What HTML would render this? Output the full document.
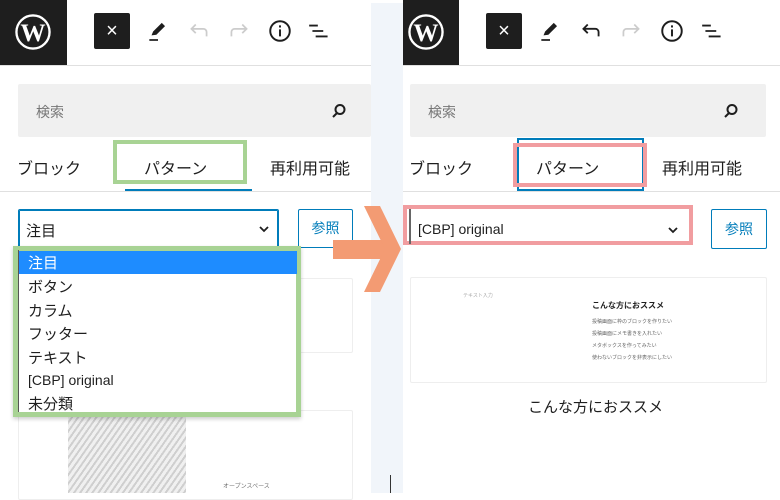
<!DOCTYPE html>
<html><head><meta charset="utf-8"><style>
*{margin:0;padding:0;box-sizing:border-box}
body{width:780px;height:493px;overflow:hidden;background:#fff;position:relative;font-family:"Liberation Sans","Noto Sans CJK JP",sans-serif;color:#1e1e1e}
.a{position:absolute}
.t{font-size:15px;white-space:nowrap}
</style></head><body>
<div class="a" style="left:371px;top:3px;width:32px;height:490px;background:#f1f5fa"></div>
<div class="a" style="left:390px;top:475px;width:1px;height:18px;background:#333"></div>

<!-- LEFT PANEL -->
<div class="a" style="left:0;top:0;width:67px;height:65px;background:#1e1e1e"></div>
<svg class="a" style="left:15px;top:14px" width="36" height="36" viewBox="0 0 20 20"><circle cx="10" cy="10" r="9.2" fill="none" stroke="#fff" stroke-width="1.3"/><text x="10" y="15" font-family="Liberation Serif,serif" font-weight="bold" font-size="14" fill="#fff" text-anchor="middle">W</text></svg>
<div class="a" style="left:94px;top:13px;width:36px;height:36px;background:#1e1e1e;border-radius:2px;color:#fff;font-size:20px;line-height:36px;text-align:center">×</div>
<svg class="a" style="left:145px;top:18px" width="26" height="26" viewBox="0 0 24 24"><path d="M6 16l1.5-3.5 8-8 3 3-8 8z" fill="#1e1e1e"/><rect x="4" y="19.5" width="8" height="1.6" fill="#1e1e1e"/></svg>
<svg class="a" style="left:186px;top:18px" width="26" height="26" viewBox="0 0 24 24" fill="none" stroke="#ccc" stroke-width="1.6"><path d="M5 10h11a3 3 0 013 3v4M9 6L5 10l4 4"/></svg>
<svg class="a" style="left:226px;top:18px" width="26" height="26" viewBox="0 0 24 24" fill="none" stroke="#ccc" stroke-width="1.6"><path d="M19 10H8a3 3 0 00-3 3v4M15 6l4 4-4 4"/></svg>
<svg class="a" style="left:267px;top:18px" width="26" height="26" viewBox="0 0 24 24" fill="none" stroke="#1e1e1e" stroke-width="1.8"><circle cx="12" cy="12" r="9"/><path d="M12 10.5v6.5M12 6.8v2"/></svg>
<svg class="a" style="left:307px;top:18px" width="26" height="26" viewBox="0 0 24 24" stroke="#1e1e1e" stroke-width="1.7"><path d="M2 7h8M5 12h10M8 17h11"/></svg>
<div class="a" style="left:0;top:65px;width:371px;height:1px;background:#e0e0e0"></div>
<div class="a" style="left:18px;top:84px;width:353px;height:53px;background:#f0f0f0;border-radius:2px"></div>
<div class="a t" style="left:36px;top:102px;color:#757575;font-size:14px">検索</div>
<svg class="a" style="left:330px;top:102px" width="18" height="18" viewBox="0 0 18 18" fill="none" stroke="#1e1e1e" stroke-width="2"><circle cx="10" cy="7.5" r="4.5"/><path d="M7 11l-4 4"/></svg>
<div class="a t" style="left:17px;top:155px;font-size:16px">ブロック</div>
<div class="a t" style="left:144px;top:155px;font-size:16px">パターン</div>
<div class="a t" style="left:270px;top:155px;font-size:16px">再利用可能</div>
<div class="a" style="left:113px;top:140px;width:134px;height:44px;border:4px solid #a8d394"></div>
<div class="a" style="left:125px;top:189px;width:127px;height:2px;background:#007cba"></div>
<div class="a" style="left:0;top:191px;width:371px;height:1px;background:#e0e0e0"></div>
<div class="a" style="left:18px;top:209px;width:261px;height:39px;border:1px solid #007cba;box-shadow:0 0 0 1px #007cba inset;border-radius:2px"></div>
<div class="a t" style="left:26px;top:220px">注目</div>
<svg class="a" style="left:258px;top:225px" width="12" height="8" viewBox="0 0 12 8" fill="none" stroke="#1e1e1e" stroke-width="1.8"><path d="M2 2l4 4 4-4"/></svg>
<div class="a" style="left:298px;top:209px;width:55px;height:39px;border:1px solid #007cba;border-radius:2px;color:#007cba;font-size:14px;text-align:center;line-height:37px">参照</div>
<div class="a" style="left:18px;top:278px;width:335px;height:75px;border:1px solid #eee;border-radius:2px"></div>
<div class="a" style="left:18px;top:410px;width:335px;height:90px;border:1px solid #eee;border-radius:2px"></div>
<div class="a" style="left:68px;top:416px;width:118px;height:77px;background:repeating-linear-gradient(125deg,#f0f0f0 0 3px,#cfcfcf 3px 5px)"></div>
<div class="a" style="left:223px;top:481px;font-size:6px;color:#777">オープンスペース</div>
<!-- dropdown -->
<div class="a" style="left:13px;top:246px;width:288px;height:171px;background:#fff;border:5px solid #a8d394;box-shadow:0 2px 4px rgba(0,0,0,.2)"></div>
<div class="a" style="left:18px;top:250px;width:1px;height:162px;background:#555"></div>
<div class="a" style="left:19px;top:251px;width:278px;height:23px;background:#1e8cff"></div>
<div class="a t" style="left:28px;top:252px;color:#fff">注目</div>
<div class="a t" style="left:28px;top:276px">ボタン</div>
<div class="a t" style="left:28px;top:300px">カラム</div>
<div class="a t" style="left:28px;top:323px">フッター</div>
<div class="a t" style="left:28px;top:347px">テキスト</div>
<div class="a t" style="left:28px;top:372px;font-size:14px">[CBP] original</div>
<div class="a t" style="left:28px;top:393px">未分類</div>

<!-- ARROW -->
<svg class="a" style="left:330px;top:200px" width="75" height="95" viewBox="0 0 75 95"><rect x="3" y="40" width="62" height="19" fill="#f39b73"/><path d="M34 6h16l21 43-21 43H34l21-43z" fill="#f39b73"/></svg>

<!-- RIGHT PANEL -->
<div class="a" style="left:403px;top:0;width:56px;height:65px;background:#1e1e1e"></div>
<svg class="a" style="left:408px;top:14px" width="36" height="36" viewBox="0 0 20 20"><circle cx="10" cy="10" r="9.2" fill="none" stroke="#fff" stroke-width="1.3"/><text x="10" y="15" font-family="Liberation Serif,serif" font-weight="bold" font-size="14" fill="#fff" text-anchor="middle">W</text></svg>
<div class="a" style="left:486px;top:13px;width:36px;height:36px;background:#1e1e1e;border-radius:2px;color:#fff;font-size:20px;line-height:36px;text-align:center">×</div>
<svg class="a" style="left:537px;top:18px" width="26" height="26" viewBox="0 0 24 24"><path d="M6 16l1.5-3.5 8-8 3 3-8 8z" fill="#1e1e1e"/><rect x="4" y="19.5" width="8" height="1.6" fill="#1e1e1e"/></svg>
<svg class="a" style="left:578px;top:18px" width="26" height="26" viewBox="0 0 24 24" fill="none" stroke="#1e1e1e" stroke-width="1.7"><path d="M5 10h11a3 3 0 013 3v4M9 6L5 10l4 4"/></svg>
<svg class="a" style="left:618px;top:18px" width="26" height="26" viewBox="0 0 24 24" fill="none" stroke="#ccc" stroke-width="1.6"><path d="M19 10H8a3 3 0 00-3 3v4M15 6l4 4-4 4"/></svg>
<svg class="a" style="left:659px;top:18px" width="26" height="26" viewBox="0 0 24 24" fill="none" stroke="#1e1e1e" stroke-width="1.8"><circle cx="12" cy="12" r="9"/><path d="M12 10.5v6.5M12 6.8v2"/></svg>
<svg class="a" style="left:700px;top:18px" width="26" height="26" viewBox="0 0 24 24" stroke="#1e1e1e" stroke-width="1.7"><path d="M2 7h8M5 12h10M8 17h11"/></svg>
<div class="a" style="left:403px;top:65px;width:377px;height:1px;background:#e0e0e0"></div>
<div class="a" style="left:410px;top:84px;width:356px;height:53px;background:#f0f0f0;border-radius:2px"></div>
<div class="a t" style="left:428px;top:102px;color:#757575;font-size:14px">検索</div>
<svg class="a" style="left:722px;top:102px" width="18" height="18" viewBox="0 0 18 18" fill="none" stroke="#1e1e1e" stroke-width="2"><circle cx="10" cy="7.5" r="4.5"/><path d="M7 11l-4 4"/></svg>
<div class="a" style="left:517px;top:138px;width:127px;height:53px;border:2px solid #007cba"></div>
<div class="a" style="left:513px;top:143px;width:134px;height:44px;border:4px solid #f19da0"></div>
<div class="a t" style="left:409px;top:155px;font-size:16px">ブロック</div>
<div class="a t" style="left:536px;top:155px;font-size:16px">パターン</div>
<div class="a t" style="left:662px;top:155px;font-size:16px">再利用可能</div>
<div class="a" style="left:403px;top:191px;width:377px;height:1px;background:#e0e0e0"></div>
<div class="a" style="left:403px;top:205px;width:290px;height:40px;border:4px solid #f19da0"></div>
<div class="a" style="left:409px;top:209px;width:2px;height:35px;background:#666"></div>
<div class="a t" style="left:418px;top:221px;font-size:14px">[CBP] original</div>
<svg class="a" style="left:667px;top:226px" width="12" height="8" viewBox="0 0 12 8" fill="none" stroke="#1e1e1e" stroke-width="1.8"><path d="M2 2l4 4 4-4"/></svg>
<div class="a" style="left:711px;top:209px;width:56px;height:40px;border:1px solid #007cba;border-radius:2px;color:#007cba;font-size:14px;text-align:center;line-height:38px">参照</div>
<div class="a" style="left:410px;top:277px;width:357px;height:106px;border:1px solid #eee;border-radius:2px"></div>
<div class="a" style="left:463px;top:292px;font-size:5px;color:#aaa">テキスト入力</div>
<div class="a" style="left:592px;top:300px;font-size:8px;font-weight:bold">こんな方におススメ</div>
<div class="a" style="left:592px;top:316px;font-size:5px;color:#666;line-height:12px">投稿画面に枠のブロックを作りたい<br>投稿画面にメモ書きを入れたい<br>メタボックスを作ってみたい<br>使わないブロックを非表示にしたい</div>
<div class="a t" style="left:528px;top:396px">こんな方におススメ</div>
</body></html>
